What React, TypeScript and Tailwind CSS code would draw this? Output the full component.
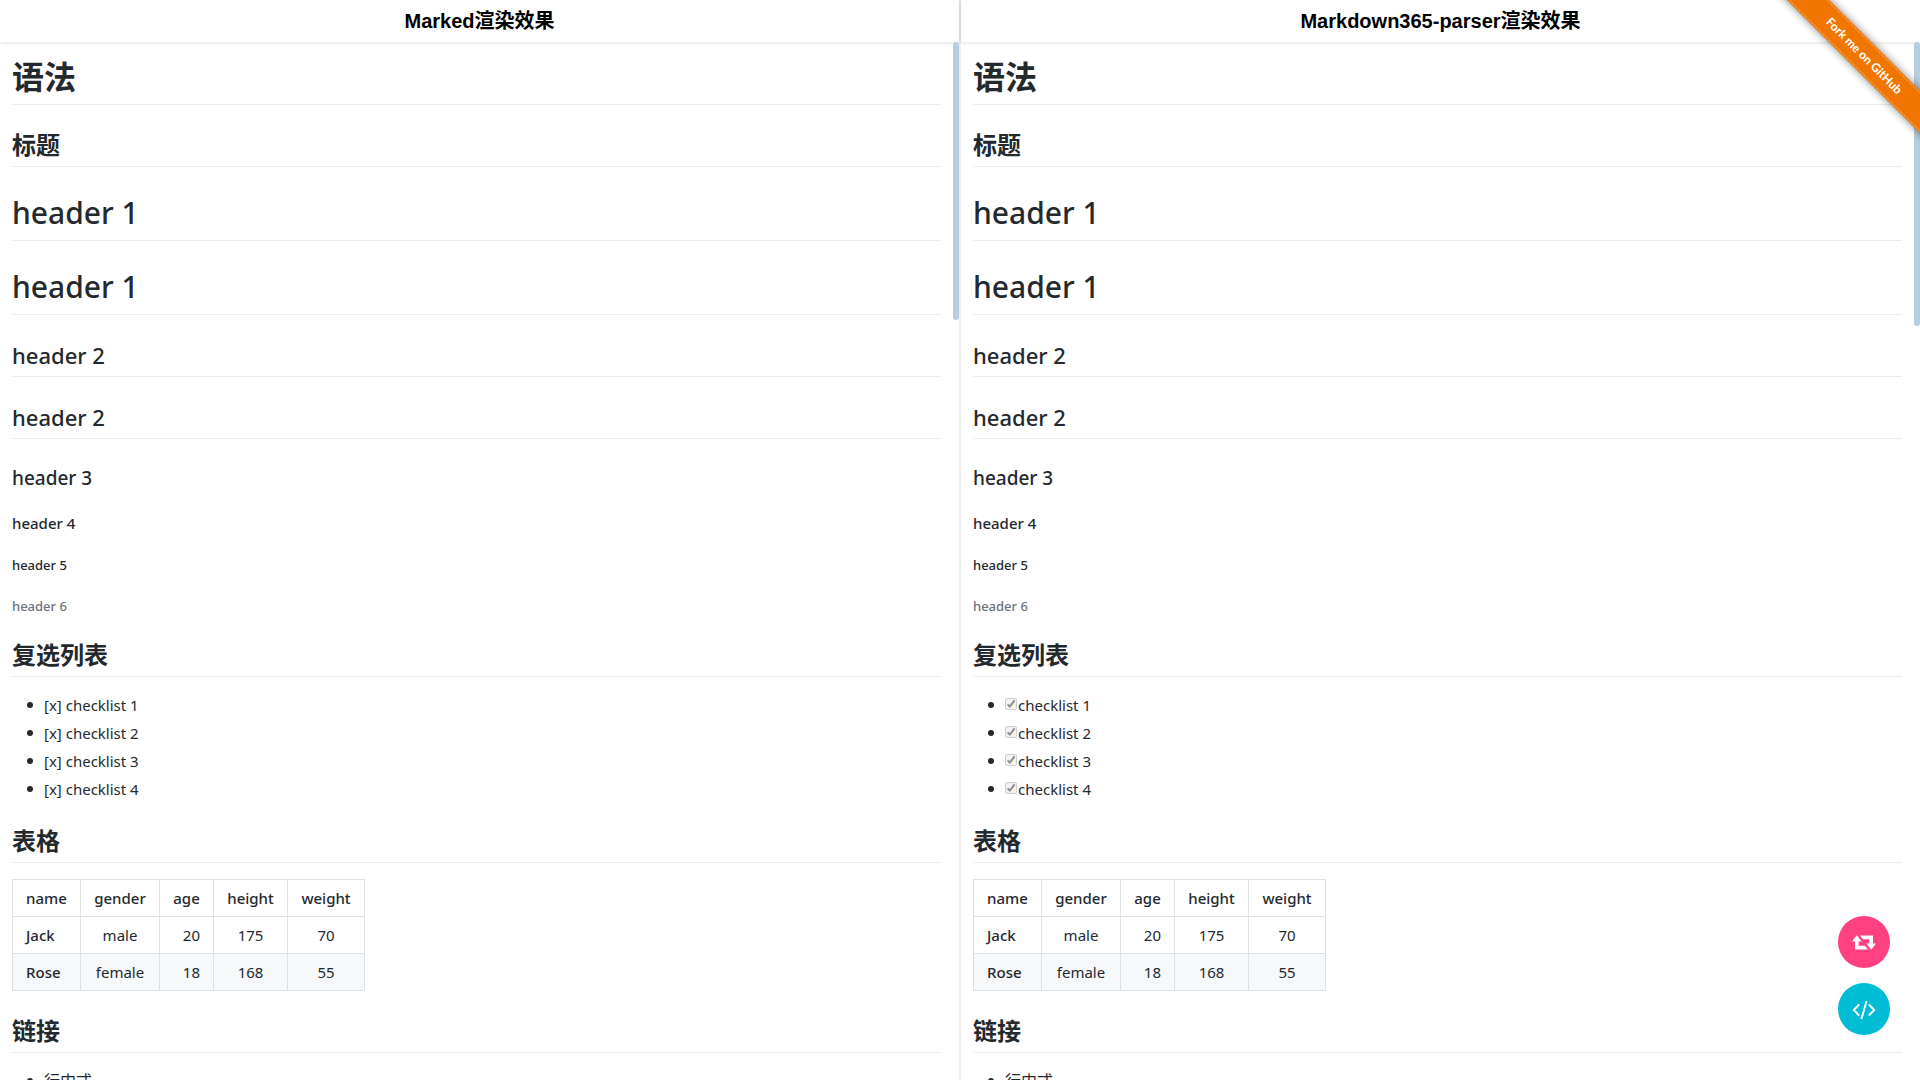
type Pane = {
  title: string;
  renderCheckbox: boolean;
  thumb: string;
};

const panes: Pane[] = [
  { title: "Marked渲染效果", renderCheckbox: false, thumb: "h-[278px]" },
  { title: "Markdown365-parser渲染效果", renderCheckbox: true, thumb: "h-[284px]" },
];

const checklist = ["checklist 1", "checklist 2", "checklist 3", "checklist 4"];

const people = [
  { name: "Jack", gender: "male", age: 20, height: 175, weight: 70 },
  { name: "Rose", gender: "female", age: 18, height: 168, weight: 55 },
];

const h1 = "pb-[5px] border-b border-[#eaecef] leading-[44px]";
const h2 = "pb-[5px] border-b border-[#eaecef] leading-8";
const cell = "border border-[#dfe2e5] px-[13px] py-1.5";
const bullet =
  "flex items-center before:size-1.5 before:mr-[11px] before:rounded-full before:bg-[#24292e]";

function PeopleTable() {
  return (
    <table className="mt-4 table-fixed border-collapse w-[353px] text-center whitespace-nowrap">
      <colgroup>
        <col className="w-[68px]" />
        <col className="w-[79px]" />
        <col className="w-[54px]" />
        <col className="w-[74px]" />
        <col className="w-[77px]" />
      </colgroup>
      <thead>
        <tr>
          {["name", "gender", "age", "height", "weight"].map((label) => (
            <th key={label} scope="col" className={`${cell} font-medium`}>
              {label}
            </th>
          ))}
        </tr>
      </thead>
      <tbody>
        {people.map((p) => (
          <tr key={p.name} className="even:bg-[#f6f8fa]">
            <td className={`${cell} text-left font-medium`}>{p.name}</td>
            <td className={cell}>{p.gender}</td>
            <td className={`${cell} text-right`}>{p.age}</td>
            <td className={cell}>{p.height}</td>
            <td className={cell}>{p.weight}</td>
          </tr>
        ))}
      </tbody>
    </table>
  );
}

function Checklist({ renderCheckbox }: { renderCheckbox: boolean }) {
  return (
    <ul className="mt-4 pl-[15px] space-y-1">
      {checklist.map((item) => (
        <li key={item} className={bullet}>
          {renderCheckbox ? (
            <label className="flex items-center gap-px">
              <span className="relative flex size-3 mb-0.5">
                <input
                  type="checkbox"
                  checked
                  disabled
                  className="appearance-none size-3 rounded-xs border border-[#cfcfcf] bg-[#f3f3f3]"
                />
                <svg
                  viewBox="0 0 12 12"
                  className="absolute inset-0 size-3 fill-none stroke-[#8f8f8f] stroke-2"
                >
                  <path d="M2.6 6.4 4.8 8.6 9.6 2.4" />
                </svg>
              </span>
              {item}
            </label>
          ) : (
            `[x] ${item}`
          )}
        </li>
      ))}
    </ul>
  );
}

function Article({ renderCheckbox }: { renderCheckbox: boolean }) {
  return (
    <article className="flex-1 min-w-0 px-3 pt-[13px] text-[15px] leading-6 text-[#24292e] font-['Noto_Sans','Noto_Sans_CJK_SC',sans-serif]">
      <h1 className={`${h1} text-[32px] font-bold`}>语法</h1>
      <h2 className={`${h2} mt-6 text-2xl font-bold`}>标题</h2>
      <h1 className={`${h1} mt-6 text-[30px] font-medium`}>header 1</h1>
      <h1 className={`${h1} mt-6 text-[30px] font-medium`}>header 1</h1>
      <h2 className={`${h2} mt-6 text-[22px] font-medium`}>header 2</h2>
      <h2 className={`${h2} mt-6 text-[22px] font-medium`}>header 2</h2>
      <h3 className="mt-6 text-[19px] leading-[30px] font-medium">header 3</h3>
      <h4 className="mt-5 text-[15px] leading-5 font-medium">header 4</h4>
      <h5 className="mt-6 text-[13px] leading-[17px] font-medium">header 5</h5>
      <h6 className="mt-6 text-[13px] leading-[17px] font-medium text-[#6a737d]">
        header 6
      </h6>

      <h2 className={`${h2} mt-6 text-2xl font-bold`}>复选列表</h2>
      <Checklist renderCheckbox={renderCheckbox} />

      <h2 className={`${h2} mt-6 text-2xl font-bold`}>表格</h2>
      <PeopleTable />

      <h2 className={`${h2} mt-6 text-2xl font-bold`}>链接</h2>
      <ul className="mt-4 pl-[15px] text-base leading-6">
        <li className={bullet}>行内式</li>
      </ul>
    </article>
  );
}

function ForkRibbon() {
  return (
    <div className="absolute top-0 right-0 size-[150px] overflow-hidden pointer-events-none">
      <a
        href="#fork"
        className="absolute top-[41px] -right-[49px] w-[210px] h-[30px] rotate-45 flex items-center justify-center bg-[#f07600] shadow-[0_0_8px_rgba(0,0,0,0.5)] pointer-events-auto"
      >
        <span className="w-full h-7 flex items-center justify-center border-y border-dotted border-[#f9b870] text-xs font-bold text-white font-['Lato',sans-serif]">
          Fork me on GitHub
        </span>
      </a>
    </div>
  );
}

export default function App() {
  return (
    <div className="relative h-screen overflow-hidden bg-white">
      <div className="grid grid-cols-2 h-full">
        {panes.map((pane) => (
          <section
            key={pane.title}
            className="flex flex-col min-w-0 min-h-0 border-[#eeeeee] first:border-r last:border-l"
          >
            <header className="relative h-[42px] shrink-0 flex items-center justify-center shadow-[0_1px_4px_rgba(0,0,0,0.12)] text-xl font-bold text-black font-['Liberation_Sans','Noto_Sans_CJK_SC',sans-serif]">
              {pane.title}
            </header>
            <div className="flex-1 min-h-0 flex overflow-hidden">
              <Article renderCheckbox={pane.renderCheckbox} />
              <div className="w-1.5 shrink-0">
                <div className={`${pane.thumb} relative rounded-full bg-[#b8cde0]`} />
              </div>
            </div>
          </section>
        ))}
      </div>

      <ForkRibbon />

      {/* floating actions */}
      <div className="absolute right-[30px] bottom-[45px] flex flex-col gap-[15px]">
        <button
          type="button"
          aria-label="Switch"
          className="size-[52px] rounded-full bg-[#ff4081] text-white flex items-center justify-center"
        >
          <svg viewBox="0 0 24 15" className="w-6 h-[15px] fill-current">
            <path d="M4.8.3 9.6 6.6H6.6V10.8H13L16 14.4H3V6.6H0zM19.2 14.7 14.4 8.4H17.4V4.2H11L8 .6H21V8.4H24z" />
          </svg>
        </button>
        <button
          type="button"
          aria-label="Source"
          className="size-[52px] rounded-full bg-[#00bcd4] text-white flex items-center justify-center"
        >
          <svg viewBox="0 0 24 24" className="size-6 fill-none stroke-current stroke-2">
            <path d="M7.2 7.4 1.8 13l5.4 5.6M16.8 7.4l5.4 5.6-5.4 5.6M14.6 4 9.4 22" />
          </svg>
        </button>
      </div>
    </div>
  );
}
